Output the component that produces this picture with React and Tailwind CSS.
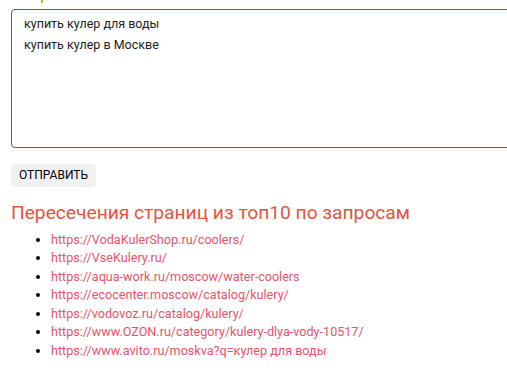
export default function App () {
  const links = [
    'https://VodaKulerShop.ru/coolers/',
    'https://VseKulery.ru/',
    'https://aqua-work.ru/moscow/water-coolers',
    'https://ecocenter.moscow/catalog/kulery/',
    'https://vodovoz.ru/catalog/kulery/',
    'https://www.OZON.ru/category/kulery-dlya-vody-10517/',
    'https://www.avito.ru/moskva?q=кулер для воды'
  ]

  return (
    <div className="h-[379px] w-[507px] overflow-hidden bg-white font-['Roboto',sans-serif]">
      <div className="relative pl-[11px] pt-[9px]">
        <span className="absolute left-[41px] top-0 h-[3px] w-[2px] bg-[#c9b23a]" />
        <div className="mr-[-10px] h-[139px] rounded-[4px] border border-[#3f6f3f] px-[12px] pt-[3px] text-[12.5px] leading-[21px] text-[#222]">
          <div>купить кулер для воды</div>
          <div>купить кулер в Москве</div>
        </div>
      </div>

      <div className="pl-[11px] pt-[14px]">
        <button className="h-[23px] rounded-[4px] bg-[#f1f1f1] px-[8px] text-[12px] uppercase text-black">
          Отправить
        </button>
      </div>

      <h2 className="pl-[11px] pt-[14px] text-[19.2px] leading-[24px] text-[#e4553f]">
        Пересечения страниц из топ10 по запросам
      </h2>

      <ul className="mt-[6px] list-disc pl-[51px] text-[12.6px] leading-[18.6px] text-[#e5546c] marker:text-black">
        {links.map(l => (
          <li key={l}>
            <a href="#">{l}</a>
          </li>
        ))}
      </ul>
    </div>
  )
}
